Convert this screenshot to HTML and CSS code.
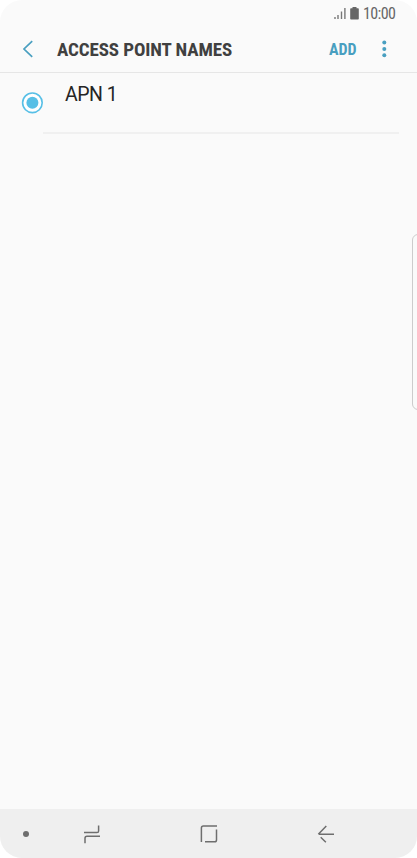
FILE: index.html
```html
<!DOCTYPE html>
<html lang="en">
<head>
    <meta charset="UTF-8">
    <meta name="viewport" content="width=device-width, initial-scale=1.0">
    <title>Access Point Names</title>
    <link rel="stylesheet" href="styles.css">
</head>
<body>

    <div class="phone">
        <!-- Status bar -->
        <div class="status-bar">
            <svg class="signal" width="12" height="13" viewBox="0 0 12 13">
                <path d="M1 10v2M4 8v4M7.5 4.5V12M10.9 1v11" fill="none" stroke="#777" stroke-width="1.4"/>
            </svg>
            <svg class="battery" width="9" height="13" viewBox="0 0 9 13">
                <path d="M2.5 0h4v1.3H8q.8 0 .8.8v9.6q0 .8-.8.8H1q-.8 0-.8-.8V2.1q0-.8.8-.8h1.5z" fill="#666"/>
            </svg>
            <span class="time">10:00</span>
        </div>

        <header class="header">
            <svg class="back-icon" width="12" height="18" viewBox="0 0 12 18">
                <path d="M10.2 1.2L2 9l8.2 7.8" fill="none" stroke="#499fc0" stroke-width="1.7"/>
            </svg>
            <h1 class="title">ACCESS POINT NAMES</h1>
            <span class="add-btn">ADD</span>
            <svg class="more-icon" width="6" height="18" viewBox="0 0 6 18">
                <g fill="#499fc0">
                    <circle cx="3.3" cy="2.6" r="2"/>
                    <circle cx="3.3" cy="9" r="2"/>
                    <circle cx="3.3" cy="15.2" r="2"/>
                </g>
            </svg>
        </header>

        <main class="content">
            <div class="apn-row">
                <svg class="radio" width="22" height="22" viewBox="0 0 22 22">
                    <circle cx="11.4" cy="10.8" r="9.8" fill="#fff" stroke="#57bfe6" stroke-width="1.6"/>
                    <circle cx="11.4" cy="10.8" r="6" fill="#57bfe6"/>
                </svg>
                <span class="apn-name">APN 1</span>
            </div>
            <!-- Edge panel handle -->
            <div class="edge-handle"></div>
        </main>

        <nav class="nav-bar">
            <span class="dot"></span>
            <svg class="recents" width="18" height="20" viewBox="0 0 18 20">
                <path d="M1 8.5h13q1.6 0 1.6-1.6V1.5M17 12.2H4q-2 0-2 2v5" fill="none" stroke="#6e6e6e" stroke-width="1.5"/>
            </svg>
            <svg class="home" width="18" height="18" viewBox="0 0 18 18">
                <path d="M1.4 17V3q0-2 2-2H17M16.5 4.5V15q0 1.8-1.8 1.8H5" fill="none" stroke="#6e6e6e" stroke-width="1.5"/>
            </svg>
            <svg class="back" width="18" height="18" viewBox="0 0 18 18">
                <path d="M17 9.3H2M9.3 1L1.3 9.2M3.7 12.2l5.2 5" fill="none" stroke="#6e6e6e" stroke-width="1.5"/>
            </svg>
        </nav>
    </div>

</body>
</html>
```
FILE: styles.css
```css
body {
    margin: 0;
    background-color: #fff;
    font-family: "Roboto", "Liberation Sans", sans-serif;
}

.phone {
    display: flex;
    flex-direction: column;
    height: 858px;
    overflow: hidden;
    background-color: #fafafa;
    border-radius: 22px;
}

.status-bar {
    display: flex;
    align-items: center;
    justify-content: flex-end;
    height: 26px;
    padding-right: 21px;
}

.battery {
    margin: 0 4px;
}

.time {
    width: 33px;
    font-size: 16px;
    letter-spacing: -0.6px;
    color: #666;
    white-space: nowrap;
    font-stretch: 75%;
}

.header {
    display: flex;
    align-items: center;
    height: 46px;
    padding: 0 30px 0 22px;
    border-bottom: 1px solid #e6e6e6;
}

.title {
    flex: 1;
    margin: 0 0 0 23px;
    font-size: 19px;
    font-weight: 700;
    letter-spacing: -0.11px;
    color: #404040;
    white-space: nowrap;
    font-stretch: 75%;
}

.add-btn {
    width: 28px;
    font-size: 16px;
    font-weight: 700;
    color: #499fc0;
    font-stretch: 75%;
}

.more-icon {
    margin-left: 24px;
}

.content {
    position: relative;
    flex: 1;
}

.apn-row {
    display: flex;
    height: 60px;
    margin-right: 18px;
    padding-left: 21px;
    background: linear-gradient(#f0f0f0, #f0f0f0) no-repeat 43px 59px / 100% 2px;
    padding-bottom: 1px;
}

.radio {
    margin-top: 19px;
}

.apn-name {
    margin: 10px 0 0 22px;
    font-size: 19.5px;
    line-height: 24px;
    letter-spacing: -0.5px;
    color: #252525;
}

.edge-handle {
    position: absolute;
    top: 161px;
    right: -7px;
    width: 10px;
    height: 174px;
    border: 1px solid #ccc;
    border-radius: 8px;
}

.nav-bar {
    display: flex;
    align-items: center;
    height: 49px;
    padding-left: 23px;
    background-color: #efefef;
}

.dot {
    width: 6px;
    height: 6px;
    border-radius: 50%;
    background-color: #6e6e6e;
}

.recents {
    margin-left: 54px;
}

.home {
    margin-left: 99px;
}

.back {
    margin-left: 99px;
}
```
